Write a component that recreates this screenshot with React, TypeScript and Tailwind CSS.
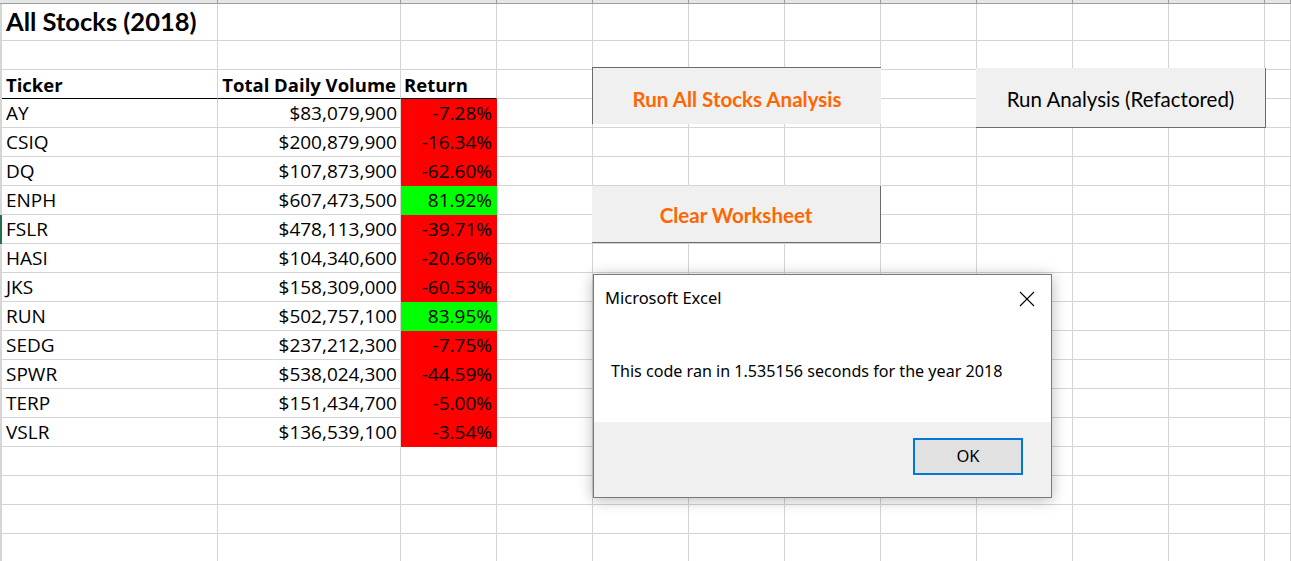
import React from "react";

type Row = { t: string; v: string; r: string; pos: boolean };

const data: Row[] = [
  { t: "AY", v: "$83,079,900", r: "-7.28%", pos: false },
  { t: "CSIQ", v: "$200,879,900", r: "-16.34%", pos: false },
  { t: "DQ", v: "$107,873,900", r: "-62.60%", pos: false },
  { t: "ENPH", v: "$607,473,500", r: "81.92%", pos: true },
  { t: "FSLR", v: "$478,113,900", r: "-39.71%", pos: false },
  { t: "HASI", v: "$104,340,600", r: "-20.66%", pos: false },
  { t: "JKS", v: "$158,309,000", r: "-60.53%", pos: false },
  { t: "RUN", v: "$502,757,100", r: "83.95%", pos: true },
  { t: "SEDG", v: "$237,212,300", r: "-7.75%", pos: false },
  { t: "SPWR", v: "$538,024,300", r: "-44.59%", pos: false },
  { t: "TERP", v: "$151,434,700", r: "-5.00%", pos: false },
  { t: "VSLR", v: "$136,539,100", r: "-3.54%", pos: false },
];

const cellFont = { fontFamily: "'Open Sans', 'Noto Sans', sans-serif" };
const titleFont = { fontFamily: "Lato, 'Open Sans', sans-serif" };
const uiFont = { fontFamily: "'Noto Sans', 'Open Sans', sans-serif" };

const EXTRA = 9; // D..K + L

function Blank({ h }: { h: string }) {
  return (
    <>
      <div className={`${h} bg-[#d6d6d6] border-b border-[#d6d6d6]`} />
      {Array.from({ length: 3 + EXTRA }).map((_, i) => (
        <div key={i} className={`${h} border-r border-b border-[#d4d4d4]`} />
      ))}
    </>
  );
}

export default function App() {
  return (
    <div className="relative w-[1291px] h-[561px] overflow-hidden bg-white" style={cellFont}>
      <div className="grid grid-cols-[2px_216px_183px_96px_96px_96px_96px_96px_96px_96px_96px_96px_1fr] text-black">
        {/* column header remainder strip */}
        <div className="h-[4px] bg-[#e6e6e6] border-b border-[#9e9e9e]" />
        {Array.from({ length: 12 }).map((_, i) => (
          <div key={i} className="h-[4px] bg-[#e6e6e6] border-b border-r border-[#9e9e9e]" />
        ))}

        {/* row 1 title */}
        <div className="h-[37px] bg-[#d6d6d6] border-b border-[#d6d6d6]" />
        <div className="h-[37px] border-r border-b border-[#d4d4d4] flex items-end pl-[4px] pb-[5px] relative z-10">
          <span className="whitespace-nowrap text-[25.5px] leading-[28px] font-bold" style={titleFont}>
            All Stocks (2018)
          </span>
        </div>
        {Array.from({ length: 2 + EXTRA }).map((_, i) => (
          <div key={i} className="h-[37px] border-r border-b border-[#d4d4d4]" />
        ))}

        {/* row 2 blank */}
        <Blank h="h-[29px]" />

        {/* row 3 headers */}
        <div className="h-[29px] bg-[#d6d6d6] border-b border-[#d6d6d6]" />
        <div className="h-[29px] border-r border-b border-r-[#d4d4d4] border-b-black flex items-end pl-[4px] pb-[2px]">
          <span className="text-[18.5px] leading-[22px] font-bold">Ticker</span>
        </div>
        <div className="h-[29px] border-r border-b border-r-[#d4d4d4] border-b-black flex items-end justify-end pr-[4px] pb-[2px]">
          <span className="text-[18.5px] leading-[22px] font-bold whitespace-nowrap">Total Daily Volume</span>
        </div>
        <div className="h-[29px] border-r border-b border-r-[#d4d4d4] border-b-black flex items-end pl-[3px] pb-[2px]">
          <span className="text-[18.5px] leading-[22px] font-bold">Return</span>
        </div>
        {Array.from({ length: EXTRA }).map((_, i) => (
          <div key={i} className="h-[29px] border-r border-b border-[#d4d4d4]" />
        ))}

        {/* data rows */}
        {data.map((d) => (
          <React.Fragment key={d.t}>
            <div
              className={`h-[29px] border-b ${
                d.t === "FSLR" ? "bg-[#217346] border-[#217346]" : "bg-[#d6d6d6] border-[#d6d6d6]"
              }`}
            />
            <div className="h-[29px] border-r border-b border-[#d4d4d4] flex items-end pl-[4px] pb-[3px]">
              <span className="text-[19px] leading-[22px]">{d.t}</span>
            </div>
            <div className="h-[29px] border-r border-b border-[#d4d4d4] flex items-end justify-end pr-[3px] pb-[3px]">
              <span className="text-[19px] leading-[22px] whitespace-nowrap">{d.v}</span>
            </div>
            <div
              className={`h-[29px] border-r border-b flex items-end justify-end pr-[4px] pb-[3px] ${
                d.pos ? "bg-[#00ff00] border-[#00ff00]" : "bg-[#ff0000] border-[#ff0000]"
              }`}
            >
              <span className="text-[19px] leading-[22px] whitespace-nowrap">{d.r}</span>
            </div>
            {Array.from({ length: EXTRA }).map((_, i) => (
              <div key={i} className="h-[29px] border-r border-b border-[#d4d4d4]" />
            ))}
          </React.Fragment>
        ))}

        {/* trailing blank rows */}
        <Blank h="h-[29px]" />
        <Blank h="h-[29px]" />
        <Blank h="h-[29px]" />
        <Blank h="h-[29px]" />
      </div>

      {/* Form buttons floating over the sheet */}
      <div
        className="absolute left-[592px] top-[67px] w-[289px] h-[57px] bg-[#f0f0f0] border-t border-l border-[#6b6b6b] flex items-center justify-center pt-[6px]"
        style={titleFont}
      >
        <span className="text-[20.5px] leading-[24px] font-bold text-[#ff6600] whitespace-nowrap">Run All Stocks Analysis</span>
      </div>
      <div
        className="absolute left-[592px] top-[186px] w-[289px] h-[57px] bg-[#f0f0f0] border-r border-b border-[#6b6b6b] flex items-center justify-center pt-[2px]"
        style={titleFont}
      >
        <span className="text-[20.5px] leading-[24px] font-bold text-[#ff6600] whitespace-nowrap">Clear Worksheet</span>
      </div>
      <div
        className="absolute left-[976px] top-[68px] w-[290px] h-[60px] bg-[#f0f0f0] border-r border-b border-[#6b6b6b] flex items-center justify-center pt-[3px]"
        style={titleFont}
      >
        <span className="text-[20.5px] leading-[24px] text-black whitespace-nowrap">Run Analysis (Refactored)</span>
      </div>

      {/* Message box */}
      <div
        className="absolute left-[593px] top-[274px] w-[459px] h-[224px] bg-white border border-[#7a7a7a] shadow-[0_2px_14px_rgba(0,0,0,0.28)] flex flex-col"
        style={uiFont}
      >
        <div className="flex items-start justify-between h-[50px] pl-[11px] pr-[16px] pt-[11px]">
          <span className="text-[16.5px] leading-[24px] text-black">Microsoft Excel</span>
          <svg width="16" height="16" viewBox="0 0 16 16" className="mt-[5px]">
            <path d="M1 1 L15 15 M15 1 L1 15" stroke="#000" strokeWidth="1.1" />
          </svg>
        </div>
        <div className="flex-1 flex items-center pl-[17px] pb-[6px]">
          <span className="text-[16.1px] leading-[24px] text-black whitespace-nowrap">
            This code ran in 1.535156 seconds for the year 2018
          </span>
        </div>
        <div className="h-[75px] bg-[#f0f0f0] flex items-start justify-end pt-[16px] pr-[28px]">
          <div className="w-[110px] h-[37px] bg-[#e1e1e1] border-2 border-[#0078d7] flex items-center justify-center">
            <span className="text-[16.5px] text-black">OK</span>
          </div>
        </div>
      </div>
    </div>
  );
}
